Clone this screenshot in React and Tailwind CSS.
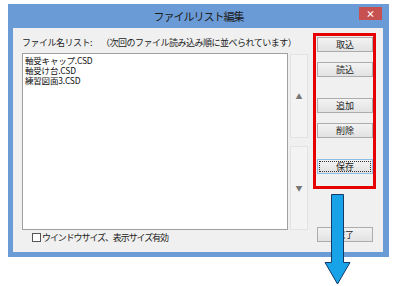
import React from "react";

const F = { fontFamily: '"Noto Sans CJK JP", "Noto Sans", sans-serif' };

function Btn({ children, focused }) {
  return (
    <div
      className={
        "w-[56px] h-[15px] flex items-center justify-center text-[9px] leading-none text-[#222] bg-gradient-to-b from-[#f3f3f3] to-[#e2e2e2] border " +
        (focused ? "border-[#8ebde8]" : "border-[#acacac]")
      }
    >
      {focused ? (
        <div className="w-[52px] h-[11px] flex items-center justify-center border border-dotted border-[#333]">
          {children}
        </div>
      ) : (
        children
      )}
    </div>
  );
}

export default function App() {
  return (
    <div className="relative w-[400px] h-[286px] bg-white overflow-hidden" style={F}>
      <div className="ml-[8px] mt-[4px] w-[381px] h-[253px] bg-[#6b9bd6] flex flex-col">
        {/* title bar */}
        <div className="h-[24px] flex items-start pt-[3px] pr-[7px]">
          <div className="w-[30px]" />
          <div className="flex-1 text-center text-[11px] leading-[18px] tracking-[-1px] text-[#1c1c1c]">
            ファイルリスト編集
          </div>
          <div className="w-[23px] h-[13px] bg-[#c75050] flex items-center justify-center text-white text-[9px] leading-none font-bold">
            ×
          </div>
        </div>
        {/* body */}
        <div className="ml-[5px] mr-[6px] h-[224px] bg-[#f0f0f0] flex">
          {/* left column */}
          <div className="pl-[9px] w-[295px] flex flex-col">
            <div className="h-[25px] pt-[9px] flex text-[9px] leading-[12px] text-[#222] tracking-[-0.5px]">
              <span className="w-[79px]">ファイル名リスト:</span>
              <span>（次回のファイル読み込み順に並べられています）</span>
            </div>
            <div className="flex h-[177px]">
              <div className="w-[266px] h-[177px] bg-white border border-[#a0a0a0] pl-[2px] pt-[1px] text-[8.5px] leading-[10px] tracking-[-0.2px] text-[#111]">
                <div className="h-[10px]">軸受キャップ.CSD</div>
                <div className="h-[10px]">軸受け台.CSD</div>
                <div className="h-[10px]">練習図面3.CSD</div>
              </div>
              <div className="ml-[2px] w-[18px] flex flex-col pt-[1px] gap-[8px]">
                <div className="h-[84px] bg-[#f3f3f3] border border-[#e2e2e2] flex items-center justify-center text-[7px] text-[#777]">
                  ▲
                </div>
                <div className="h-[84px] bg-[#f3f3f3] border border-[#e2e2e2] flex items-center justify-center text-[7px] text-[#777]">
                  ▼
                </div>
              </div>
            </div>
            <div className="flex items-center mt-[2px] pl-[10px] h-[11px]">
              <div className="w-[9px] h-[9px] bg-white border border-[#555]" />
              <span className="ml-[1px] text-[9px] leading-none tracking-[-1.1px] text-[#222]">
                ウインドウサイズ、表示サイズ有効
              </span>
            </div>
          </div>
          {/* right column */}
          <div className="ml-[5px] pt-[5px] flex flex-col">
            <div className="w-[63px] h-[156px] border-[3px] border-[#e60000] pl-[1px] pt-[1px] flex flex-col">
              <Btn>取込</Btn>
              <div className="h-[10px]" />
              <Btn>読込</Btn>
              <div className="h-[21px]" />
              <Btn>追加</Btn>
              <div className="h-[10px]" />
              <Btn>削除</Btn>
              <div className="h-[21px]" />
              <Btn focused>保存</Btn>
            </div>
            <div className="mt-[38px] ml-[4px]">
              <Btn>完了</Btn>
            </div>
          </div>
        </div>
      </div>
      {/* arrow overlay */}
      <svg className="absolute left-[324px] top-[193px]" width="28" height="93" viewBox="0 0 28 93">
        <polygon
          points="7.5,1.5 19.5,1.5 19.5,69.5 26,69.5 13.5,91 1,69.5 7.5,69.5"
          fill="#18a2e8"
          stroke="#173a66"
          strokeWidth="1"
        />
      </svg>
    </div>
  );
}
